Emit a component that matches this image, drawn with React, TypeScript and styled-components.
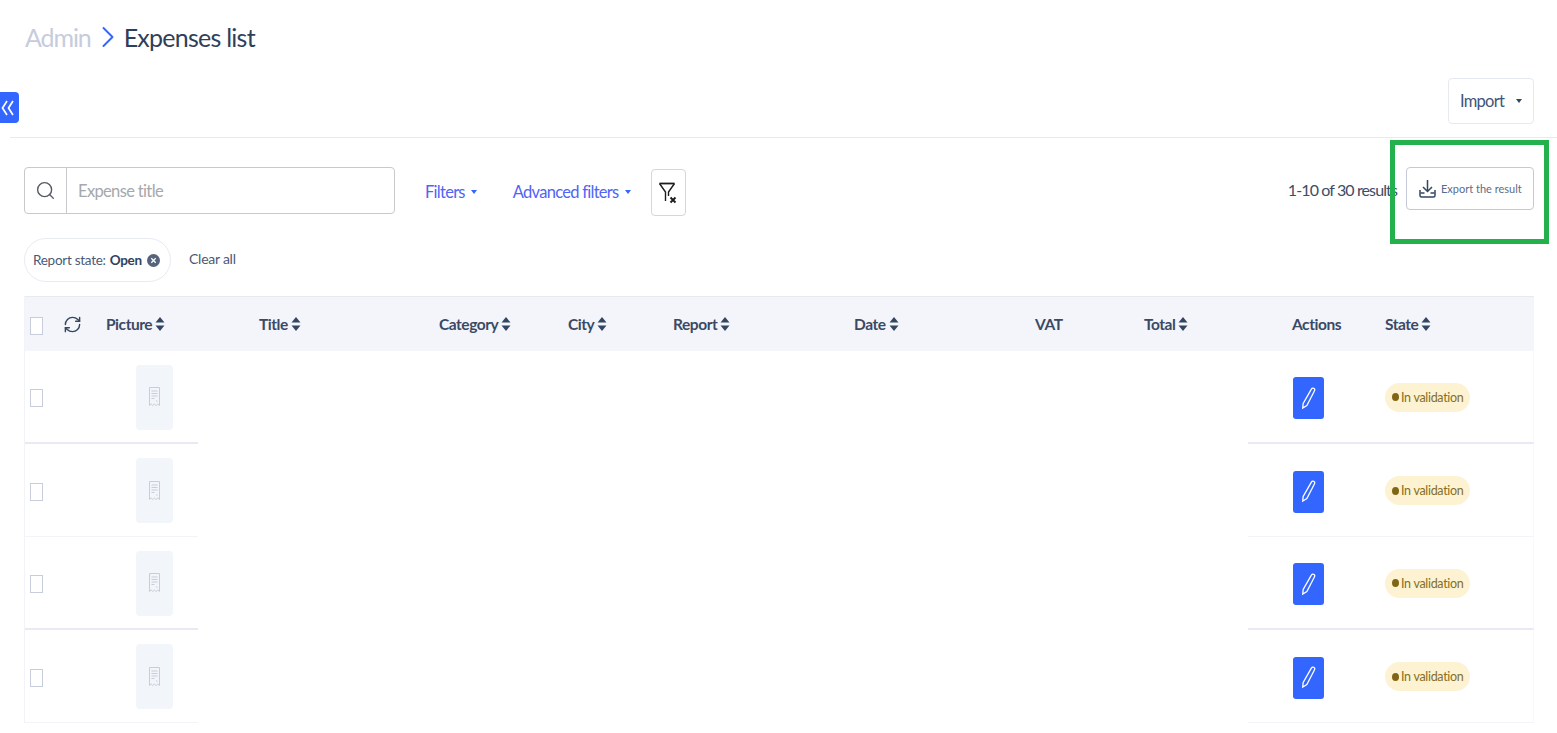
import React from "react";
import styled, { createGlobalStyle } from "styled-components";
import { Search, RefreshCw, ChevronRight } from "lucide-react";

const Global = createGlobalStyle`
  html, body { margin: 0; padding: 0; background: #fff; height: 100%; overflow: hidden; }
  body { font-family: "Lato", "Liberation Sans", sans-serif; color: #33415c; }
`;

const Page = styled.div`
  position: relative;
  width: 1557px;
  height: 733px;
  overflow: hidden;
  background: #fff;
`;

const Breadcrumb = styled.div`
  display: flex;
  align-items: center;
  height: 74px;
  padding: 0 0 2px 24px;
  font-size: 25px;
  letter-spacing: -0.75px;
`;
const Crumb = styled.span`
  margin-left: 1px;
  letter-spacing: -1.1px;
  color: #c6ccdb;
`;
const CrumbCurrent = styled.span`
  color: #2f3f59;
`;
const CrumbSep = styled.span`
  display: flex;
  margin: 0 -2px 0 -1px;
  color: #3366ff;
`;

const ActionBar = styled.div`
  display: flex;
  justify-content: flex-end;
  align-items: flex-start;
  height: 59px;
  margin-left: 10px;
  padding: 2px 23px 0 0;
  border-bottom: 1px solid #e9eaee;
`;
const ImportButton = styled.button`
  display: flex;
  align-items: center;
  justify-content: space-between;
  box-sizing: border-box;
  width: 86px;
  height: 46px;
  padding: 0 11px;
  background: #fff;
  border: 1px solid #e6e9f2;
  border-radius: 4px;
  font: inherit;
  font-size: 16.5px;
  letter-spacing: -0.75px;
  color: #41557a;
`;
const Caret = styled.span<{ $color: string }>`
  width: 0;
  height: 0;
  border-left: 3px solid transparent;
  border-right: 3px solid transparent;
  border-top: 4px solid ${(p) => p.$color};
`;

const Collapse = styled.button`
  position: absolute;
  left: 0;
  top: 92px;
  width: 19px;
  height: 31px;
  padding: 0 0 0 1px;
  display: flex;
  align-items: center;
  justify-content: flex-start;
  background: #3366ff;
  border: 0;
  border-radius: 0 4px 4px 0;
`;

const FilterBar = styled.div`
  display: flex;
  align-items: flex-start;
  padding: 29px 23px 0 24px;
  height: 71px;
`;
const SearchBox = styled.div`
  display: flex;
  box-sizing: border-box;
  width: 371px;
  height: 47px;
  border: 1px solid #c9c9cc;
  border-radius: 4px;
`;
const SearchIcon = styled.span`
  display: flex;
  align-items: center;
  justify-content: center;
  width: 41px;
  border-right: 1px solid #c9c9cc;
  color: #555b63;
`;
const Placeholder = styled.span`
  align-self: center;
  padding-left: 11px;
  font-size: 16.5px;
  letter-spacing: -0.65px;
  color: #a5a8ad;
`;
const FilterLink = styled.span<{ $left: number }>`
  display: flex;
  align-items: center;
  gap: 6px;
  margin-left: ${(p) => p.$left}px;
  height: 50px;
  font-size: 16.5px;
  letter-spacing: -0.72px;
  color: #5064f5;
`;
const ClearFilters = styled.button`
  display: flex;
  align-items: center;
  justify-content: center;
  box-sizing: border-box;
  width: 35px;
  height: 47px;
  margin: 2px 0 0 20px;
  padding: 0;
  background: #fff;
  border: 1px solid #d4d6da;
  border-radius: 4px;
`;
const Results = styled.span`
  margin-left: auto;
  line-height: 45px;
  font-size: 16px;
  letter-spacing: -0.88px;
  color: #3d4d66;
`;
const ExportButton = styled.button`
  display: flex;
  align-items: center;
  gap: 5px;
  box-sizing: border-box;
  width: 128px;
  height: 43px;
  margin-left: 9px;
  padding: 0 0 0 12px;
  background: #fff;
  border: 1px solid #c4c9d8;
  border-radius: 4px;
  font: inherit;
  font-size: 11px;
  white-space: nowrap;
  color: #5a6c8c;
`;

const ChipRow = styled.div`
  display: flex;
  align-items: flex-start;
  gap: 18px;
  height: 58px;
  padding-left: 24px;
`;
const Chip = styled.div`
  display: flex;
  align-items: center;
  box-sizing: border-box;
  width: 147px;
  height: 44px;
  padding-left: 8px;
  border: 1px solid #e9ebf3;
  border-radius: 22px;
  font-size: 13.5px;
  letter-spacing: -0.27px;
  white-space: nowrap;
  color: #4a5a75;
  b {
    margin-left: 4px;
    color: #33415c;
  }
`;
const ChipClose = styled.span`
  display: flex;
  margin-left: 5px;
`;
const ClearAll = styled.span`
  font-size: 14px;
  letter-spacing: -0.25px;
  line-height: 42px;
  color: #4a5a75;
`;

const Table = styled.div`
  margin: 0 23px 0 24px;
  border-left: 1px solid #f2f3f8;
`;
const HeadRow = styled.div`
  display: grid;
  grid-template-columns: 33px 42px 153px 180px 129px 105px 181px 181px 109px 148px 93px 1fr;
  align-items: center;
  height: 55px;
  padding-left: 5px;
  background: #f3f5fb;
  border-top: 1px solid #e8eaf2;
  box-sizing: border-box;
`;
const HeadCell = styled.span`
  display: flex;
  align-items: center;
  gap: 3px;
  padding-left: 1px;
  font-size: 15.5px;
  font-weight: 700;
  letter-spacing: -0.45px;
  color: #3a4a64;
`;
const Check = styled.span`
  display: block;
  box-sizing: border-box;
  width: 13px;
  height: 18px;
  margin-top: 3px;
  border: 1px solid #c8cddc;
  background: #fff;
`;
const Row = styled.div`
  display: grid;
  grid-template-columns: 173px 1fr 286px;
  height: 93px;
`;
const Edge = styled.div<{ $thick: boolean }>`
  display: flex;
  align-items: center;
  box-sizing: border-box;
  border-bottom: ${(p) => (p.$thick ? "2px solid #e8eaf3" : "1px solid #f3f4f9")};
`;
const LeftCell = styled(Edge)`
  padding-left: 5px;
`;
const RightCell = styled(Edge)`
  padding-left: 45px;
  border-right: 1px solid #f8f9fb;
`;
const Tile = styled.div`
  display: flex;
  align-items: center;
  justify-content: center;
  width: 37px;
  height: 65px;
  margin: 1px 0 0 93px;
  background: #f2f5f9;
  border-radius: 4px;
`;
const EditButton = styled.button`
  display: flex;
  align-items: center;
  justify-content: center;
  width: 31px;
  height: 42px;
  margin-top: 3px;
  padding: 0;
  background: #3366ff;
  border: 0;
  border-radius: 3px;
`;
const Badge = styled.span`
  display: flex;
  align-items: center;
  gap: 2px;
  box-sizing: border-box;
  width: 85px;
  height: 29px;
  margin: 1px 0 0 61px;
  padding-left: 7px;
  background: #fdf3d2;
  border-radius: 15px;
  font-size: 12.5px;
  letter-spacing: -0.3px;
  white-space: nowrap;
  color: #866e22;
`;
const Dot = styled.span`
  width: 7px;
  height: 8px;
  border-radius: 50%;
  background: #806515;
`;
const Annotation = styled.div`
  position: absolute;
  left: 1390px;
  top: 140px;
  box-sizing: border-box;
  width: 159px;
  height: 104px;
  border: 5px solid #22b14c;
  pointer-events: none;
`;

const DoubleLeft = () => (
  <svg width="13" height="16" viewBox="0 0 13 16" fill="none" stroke="#fff" strokeWidth="1.700" aria-hidden="true">
    <path d="M6 1 1.500 8 6 15M12 1 7.500 8 12 15" />
  </svg>
);

const Sort = () => (
  <svg width="10" height="16" viewBox="0 0 10 16" fill="#33465f" aria-hidden="true">
    <path d="M5 1 9.500 6.500H.5Z" />
    <path d="M5 15 9.500 9.500H.5Z" />
  </svg>
);

const FunnelX = () => (
  <svg width="20" height="22" viewBox="0 0 20 22" fill="none" stroke="#1c1c1c" aria-hidden="true">
    <path d="M1.500 1.500h15" strokeWidth="1.800" />
    <path d="M1.500 1.500 7.500 10v9M16.500 1.500 10.500 10v4" strokeWidth="1.400" />
    <path d="M12.500 15.500l5 5M17.500 15.500l-5 5" strokeWidth="1.900" />
  </svg>
);

const Download = () => (
  <svg width="17" height="19" viewBox="0 0 17 19" fill="none" stroke="#33465f" strokeWidth="1.500" aria-hidden="true">
    <path d="M8.500 1v11M4 8l4.500 4.500L13 8" />
    <path d="M1 11v5.500a1.500 1.500 0 0 0 1.500 1.500h12a1.500 1.500 0 0 0 1.500-1.500V11" />
    <path d="M1.500 14h4M11.500 14h4" />
  </svg>
);

const CloseDot = () => (
  <svg width="13" height="13" viewBox="0 0 13 13" aria-hidden="true">
    <circle cx="6.500" cy="6.500" r="6.500" fill="#56647b" />
    <path d="M4.300 4.300l4.400 4.400M8.700 4.300l-4.400 4.400" stroke="#fff" strokeWidth="1.300" />
  </svg>
);

const Receipt = () => (
  <svg width="11" height="20" viewBox="0 0 11 20" fill="none" stroke="#c8cdd9" aria-hidden="true">
    <path d="M.5 .5h10v18l-1.700-1.500-1.600 1.500-1.700-1.500-1.700 1.500-1.600-1.500-1.700 1.500Z" />
    <path d="M2.500 4h6M2.500 6.500h6M2.500 9h6M2.500 11.500h3M7 14h1.500" />
  </svg>
);

const Pencil = () => (
  <svg width="15" height="23" viewBox="0 0 18 28" fill="none" stroke="#fff" strokeWidth="1.600" aria-hidden="true">
    <path d="M12.500 2.500c1-1.300 2.500-1.300 3.300-.6.900.7 1 2 .2 3.300L7 22.500 2 25.500l.5-5.500Z" />
  </svg>
);

const columns: { label: string; sort: boolean }[] = [
  { label: "Picture", sort: true },
  { label: "Title", sort: true },
  { label: "Category", sort: true },
  { label: "City", sort: true },
  { label: "Report", sort: true },
  { label: "Date", sort: true },
  { label: "VAT", sort: false },
  { label: "Total", sort: true },
  { label: "Actions", sort: false },
  { label: "State", sort: true },
];

const rows = [true, false, true, false];

export default function App() {
  return (
    <Page>
      <Global />
      <Breadcrumb>
        <Crumb>Admin</Crumb>
        <CrumbSep>
          <ChevronRight size={36} strokeWidth={1.300} />
        </CrumbSep>
        <CrumbCurrent>Expenses list</CrumbCurrent>
      </Breadcrumb>
      <Collapse aria-label="Collapse">
        <DoubleLeft />
      </Collapse>
      <ActionBar>
        <ImportButton>
          Import
          <Caret $color="#33465f" />
        </ImportButton>
      </ActionBar>
      <FilterBar>
        <SearchBox>
          <SearchIcon>
            <Search size={21} strokeWidth={1.600} />
          </SearchIcon>
          <Placeholder>Expense title</Placeholder>
        </SearchBox>
        <FilterLink $left={30}>
          Filters <Caret $color="#3366ff" />
        </FilterLink>
        <FilterLink $left={36}>
          Advanced filters <Caret $color="#3366ff" />
        </FilterLink>
        <ClearFilters aria-label="Clear filters">
          <FunnelX />
        </ClearFilters>
        <Results>1-10 of 30 results</Results>
        <ExportButton>
          <Download />
          Export the result
        </ExportButton>
      </FilterBar>
      <ChipRow>
        <Chip>
          Report state: <b>Open</b>
          <ChipClose>
            <CloseDot />
          </ChipClose>
        </Chip>
        <ClearAll>Clear all</ClearAll>
      </ChipRow>
      <Table>
        <HeadRow>
          <Check />
          <RefreshCw size={19} strokeWidth={1.800} color="#33465f" />
          {columns.map((c) => (
            <HeadCell key={c.label}>
              {c.label}
              {c.sort && <Sort />}
            </HeadCell>
          ))}
        </HeadRow>
        {rows.map((thick, i) => (
          <Row key={i}>
            <LeftCell $thick={thick}>
              <Check />
              <Tile>
                <Receipt />
              </Tile>
            </LeftCell>
            <div />
            <RightCell $thick={thick}>
              <EditButton aria-label="Edit">
                <Pencil />
              </EditButton>
              <Badge>
                <Dot />
                In validation
              </Badge>
            </RightCell>
          </Row>
        ))}
      </Table>
      <Annotation />
    </Page>
  );
}
